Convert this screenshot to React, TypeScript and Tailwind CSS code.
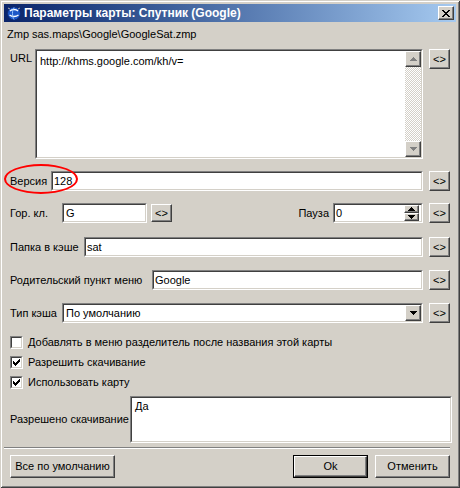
import type { ReactNode } from "react";

const raised =
  "border border-t-white border-l-white border-b-[#404040] border-r-[#404040] shadow-[inset_-1px_-1px_0_#808080] bg-[#d4d0c8]";

function Field({ className = "", children }: { className?: string; children?: ReactNode }) {
  return (
    <div className={`border border-t-[#808080] border-l-[#808080] border-b-white border-r-white ${className}`}>
      <div className="flex h-full w-full border border-t-[#404040] border-l-[#404040] border-b-[#d4d0c8] border-r-[#d4d0c8] bg-white">
        {children}
      </div>
    </div>
  );
}

function Arrow({ dir, color = "#000" }: { dir: "up" | "down"; color?: string }) {
  return (
    <svg width="7" height="4" viewBox="0 0 7 4" className="block">
      {dir === "up" ? (
        <path d="M3 0h1v1h1v1h1v1h1v1H0V3h1V2h1V1h1z" fill={color} />
      ) : (
        <path d="M0 0h7v1H6v1H5v1H4v1H3V3H2V2H1V1H0z" fill={color} />
      )}
    </svg>
  );
}

function CodeButton({ h = "h-[20px]" }: { h?: string }) {
  return (
    <div className={`${raised} ${h} flex w-[21px] shrink-0 items-center justify-center text-[11px] leading-none`}>
      &lt;&gt;
    </div>
  );
}

function Check({ checked, label }: { checked: boolean; label: string }) {
  return (
    <div className="flex h-[13px] items-center pl-[6px]">
      <div className="h-[13px] w-[13px] shrink-0 border border-t-[#808080] border-l-[#808080] border-b-white border-r-white">
        <div className="flex h-full w-full items-center justify-center border border-t-[#404040] border-l-[#404040] border-b-[#d4d0c8] border-r-[#d4d0c8] bg-white">
          {checked && (
            <svg width="7" height="7" viewBox="0 0 7 7" className="block">
              <path d="M6 0h1v3H6v1H5v1H4v1H3v1H2V6H1V5H0V2h1v1h1v1h1V3h1V2h1V1h1z" fill="#000" />
            </svg>
          )}
        </div>
      </div>
      <span className="ml-[5px] leading-[13px]">{label}</span>
    </div>
  );
}

export default function App() {
  return (
    <div className="relative flex h-[488px] w-[460px] flex-col bg-[#d4d0c8] p-[4px] font-['Liberation_Sans',Arial,sans-serif] text-[11px] text-black shadow-[inset_1px_1px_0_#d4d0c8,inset_-1px_-1px_0_#404040,inset_2px_2px_0_#fff,inset_-2px_-2px_0_#808080]">
      {/* title bar */}
      <div className="flex h-[18px] items-center bg-linear-to-r from-[#0a246a] to-[#a6caf0] px-[2px]">
        <svg width="16" height="16" viewBox="0 0 16 16" className="shrink-0">
          <circle cx="8" cy="8.5" r="6.5" fill="#1d58c8" stroke="#0b2a78" />
          <path d="M4 6c2-2 6-2 8 0M3.5 10c2.5 2 6.5 2 9 0" stroke="#fff" strokeWidth="1.3" fill="none" />
          <path d="M8 2.5c-2 2-2 10 0 12" stroke="#9cc8ff" strokeWidth="1" fill="none" />
          <path d="M2 3l2 1M14 3l-2 1" stroke="#b0b0b0" strokeWidth="1" />
        </svg>
        <span className="ml-[2px] text-[12px] font-bold leading-none text-white">Параметры карты: Спутник (Google)</span>
        <div className={`${raised} ml-auto flex h-[14px] w-[16px] items-center justify-center`}>
          <svg width="8" height="7" viewBox="0 0 8 7" className="block">
            <path d="M0 0h2v1h1v1h2V1h1V0h2v1H7v1H6v1H5v1h1v1h1v1h1v1H6V6H5V5H3v1H2v1H0V6h1V5h1V4h1V3H2V2H1V1H0z" fill="#000" />
          </svg>
        </div>
      </div>

      {/* zmp path */}
      <div className="mt-[6px] flex h-[13px] items-center pl-[3px] leading-[13px]">
        <span className="w-[25px]">Zmp</span>
        <span>sas.maps\Google\GoogleSat.zmp</span>
      </div>

      {/* URL */}
      <div className="mt-[8px] flex h-[110px] pl-[6px]">
        <span className="w-[25px] pt-[3px] leading-[13px]">URL</span>
        <Field className="h-[110px] w-[388px]">
          <div className="flex-1 px-[3px] pt-[4px] leading-[13px]">http://khms.google.com/kh/v=</div>
          <div className="flex w-[16px] flex-col bg-[repeating-conic-gradient(#d4d0c8_0_25%,#fff_0_50%)] bg-[length:2px_2px]">
            <div className={`${raised} flex h-[16px] items-center justify-center`}>
              <Arrow dir="up" color="#808080" />
            </div>
            <div className="flex-1" />
            <div className={`${raised} flex h-[16px] items-center justify-center`}>
              <Arrow dir="down" color="#808080" />
            </div>
          </div>
        </Field>
        <div className="ml-[6px]">
          <CodeButton />
        </div>
      </div>

      {/* version */}
      <div className="mt-[12px] flex h-[20px] items-center pl-[6px]">
        <span className="w-[41px]">Версия</span>
        <Field className="h-[20px] w-[372px]">
          <span className="flex items-center pl-[1px]">128</span>
        </Field>
        <div className="ml-[6px]">
          <CodeButton />
        </div>
      </div>

      {/* hotkey + pause */}
      <div className="mt-[12px] flex h-[20px] items-center pl-[6px] pr-[6px]">
        <span className="w-[52px]">Гор. кл.</span>
        <Field className="h-[20px] w-[85px]">
          <span className="flex items-center pl-[2px]">G</span>
        </Field>
        <div className="ml-[4px]">
          <CodeButton h="h-[18px]" />
        </div>
        <div className="flex-1" />
        <span>Пауза</span>
        <Field className="ml-[4px] h-[20px] w-[90px]">
          <span className="flex flex-1 items-center pl-[1px]">0</span>
          <div className="mr-[2px] flex w-[15px] flex-col justify-center">
            <div className={`${raised} flex h-[8px] items-center justify-center`}>
              <Arrow dir="up" />
            </div>
            <div className={`${raised} flex h-[8px] items-center justify-center`}>
              <Arrow dir="down" />
            </div>
          </div>
        </Field>
        <div className="ml-[6px]">
          <CodeButton />
        </div>
      </div>

      {/* cache folder */}
      <div className="mt-[14px] flex h-[20px] items-center pl-[6px]">
        <span className="w-[74px]">Папка в кэше</span>
        <Field className="h-[20px] w-[339px]">
          <span className="flex items-center pl-[1px]">sat</span>
        </Field>
        <div className="ml-[6px]">
          <CodeButton />
        </div>
      </div>

      {/* parent menu */}
      <div className="mt-[13px] flex h-[20px] items-center pl-[6px]">
        <span className="w-[142px]">Родительский пункт меню</span>
        <Field className="h-[20px] w-[271px]">
          <span className="flex items-center pl-[1px]">Google</span>
        </Field>
        <div className="ml-[6px]">
          <CodeButton />
        </div>
      </div>

      {/* cache type */}
      <div className="mt-[13px] flex h-[20px] items-center pl-[6px]">
        <span className="w-[52px]">Тип кэша</span>
        <Field className="h-[20px] w-[361px]">
          <span className="flex flex-1 items-center pl-[2px]">По умолчанию</span>
          <div className={`${raised} flex w-[16px] items-center justify-center`}>
            <Arrow dir="down" />
          </div>
        </Field>
        <div className="ml-[6px]">
          <CodeButton />
        </div>
      </div>

      {/* checkboxes */}
      <div className="mt-[13px] flex flex-col gap-[7px]">
        <Check checked={false} label="Добавлять в меню разделитель после названия этой карты" />
        <Check checked label="Разрешить скачивание" />
        <Check checked label="Использовать карту" />
      </div>

      {/* allowed download */}
      <div className="mt-[7px] flex h-[47px] items-center pl-[6px]">
        <span className="w-[120px]">Разрешено скачивание</span>
        <Field className="h-[47px] w-[322px]">
          <div className="px-[3px] pt-[2px] leading-[13px]">Да</div>
        </Field>
      </div>

      <div className="mt-[4px] h-[2px] w-[446px] border-t border-b border-t-[#808080] border-b-white" />

      {/* buttons */}
      <div className="mt-[6px] flex h-[23px] pl-[6px] pr-[6px]">
        <div className={`${raised} flex w-[105px] items-center justify-center`}>Все по умолчанию</div>
        <div className="ml-auto flex w-[75px] border border-black">
          <div className={`${raised} flex flex-1 items-center justify-center`}>Ok</div>
        </div>
        <div className={`${raised} ml-[7px] flex w-[75px] items-center justify-center`}>Отменить</div>
      </div>

      {/* annotation */}
      <div className="absolute left-[4px] top-[164px] h-[30px] w-[74px] rounded-[50%] border-2 border-[#f00]" />
    </div>
  );
}
